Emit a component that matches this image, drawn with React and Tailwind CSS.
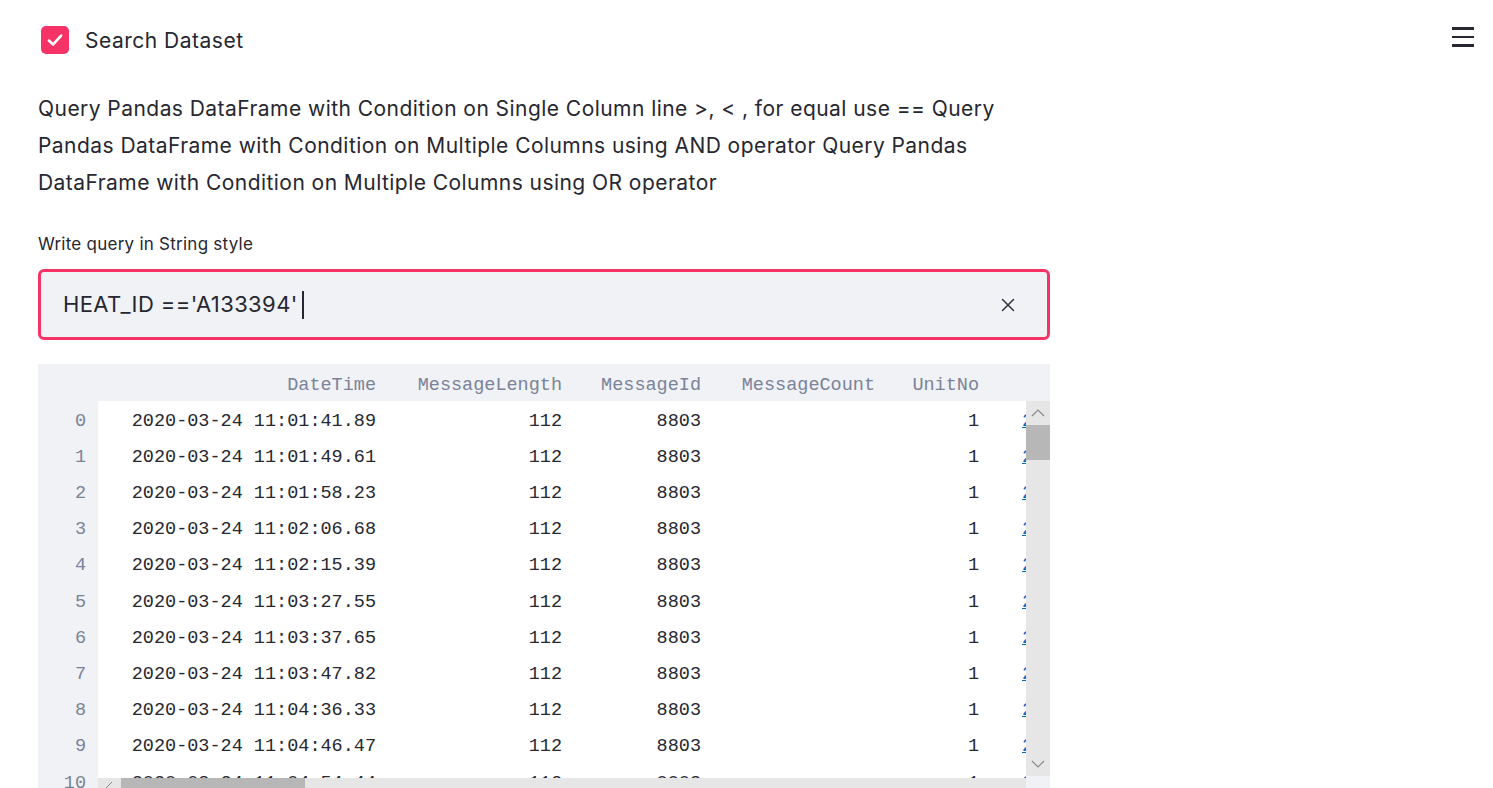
import { X } from "lucide-react";

const rows = [
  "2020-03-24 11:01:41.89",
  "2020-03-24 11:01:49.61",
  "2020-03-24 11:01:58.23",
  "2020-03-24 11:02:06.68",
  "2020-03-24 11:02:15.39",
  "2020-03-24 11:03:27.55",
  "2020-03-24 11:03:37.65",
  "2020-03-24 11:03:47.82",
  "2020-03-24 11:04:36.33",
  "2020-03-24 11:04:46.47",
  "2020-03-24 11:04:54.44",
];

const sans = { fontFamily: 'Inter, "Noto Sans", sans-serif' };

function Row({ dt }) {
  return (
    <div className="flex h-[36.2px] items-center pt-[5px] text-[#262730] whitespace-nowrap">
      <div className="w-[288px] shrink-0 pr-[10px] text-right">{dt}</div>
      <div className="w-[186px] shrink-0 pr-[10px] text-right">112</div>
      <div className="w-[139px] shrink-0 pr-[10px] text-right">8803</div>
      <div className="w-[174px] shrink-0 pr-[10px] text-right"></div>
      <div className="w-[104px] shrink-0 pr-[10px] text-right">1</div>
      <div className="shrink-0 pl-[33px] text-[#0068c9] underline">{dt}</div>
    </div>
  );
}

export default function App() {
  return (
    <div className="relative h-[788px] w-full overflow-hidden bg-white text-[#262730]" style={sans}>
      {/* hamburger */}
      <div className="absolute right-[19px] top-[27px] flex w-[22px] flex-col gap-[6px]">
        <span className="h-[2.5px] w-full bg-[#262730]" />
        <span className="h-[2.5px] w-full bg-[#262730]" />
        <span className="h-[2.5px] w-full bg-[#262730]" />
      </div>

      <div className="ml-[38px] w-[1012px] pt-[26px]">
        {/* checkbox */}
        <div className="flex h-[28px] items-center gap-[16px] pl-[3px]">
          <div className="flex h-[28px] w-[28px] items-center justify-center rounded-[5px] bg-[#f63366]">
            <svg width="20" height="20" viewBox="0 0 18 18" fill="none">
              <path d="M3.5 9.5 L7.3 13 L14.5 5" stroke="white" strokeWidth="2.4" strokeLinecap="round" strokeLinejoin="round" />
            </svg>
          </div>
          <span className="mt-[2px] text-[21px] leading-[28px] tracking-[0.5px]">Search Dataset</span>
        </div>

        <p className="mt-[36px] pr-[24px] text-[21px] leading-[37px] tracking-[0.45px]">
          Query Pandas DataFrame with Condition on Single Column line &gt;, &lt; , for equal use == Query Pandas DataFrame with Condition on Multiple Columns using AND operator Query Pandas DataFrame with Condition on Multiple Columns using OR operator
        </p>

        <div className="mt-[31px] text-[17px] leading-[24px] tracking-[0.25px]">Write query in String style</div>

        {/* input */}
        <div className="mt-[13px] flex h-[71px] items-center rounded-[6px] border-[3px] border-[#f63366] bg-[#f0f2f6] pl-[22px] pr-[28px]">
          <span className="text-[22px] tracking-[0.4px]">HEAT_ID =='A133394'</span>
          <span className="ml-[4px] h-[28px] w-[2px] bg-[#262730]" />
          <div className="flex-1" />
          <X size={22} strokeWidth={1.6} className="text-[#31333f]" />
        </div>

        {/* dataframe */}
        <div
          className="relative mt-[24px] h-[430px] overflow-hidden bg-[#f0f2f6] text-[18.5px]"
          style={{ fontFamily: '"Liberation Mono", "DejaVu Sans Mono", monospace' }}
        >
          <div className="flex h-[37px] items-center whitespace-nowrap pl-[60px] pt-[6px] text-[#7a8399]">
            <div className="w-[288px] shrink-0 pr-[10px] text-right">DateTime</div>
            <div className="w-[186px] shrink-0 pr-[10px] text-right">MessageLength</div>
            <div className="w-[139px] shrink-0 pr-[10px] text-right">MessageId</div>
            <div className="w-[174px] shrink-0 pr-[10px] text-right">MessageCount</div>
            <div className="w-[104px] shrink-0 pr-[10px] text-right">UnitNo</div>
          </div>
          <div className="flex">
            <div className="w-[60px] shrink-0 text-[#7a8399]">
              {rows.map((_, i) => (
                <div key={i} className="flex h-[36.2px] items-center justify-end pr-[12px] pt-[5px]">
                  {i}
                </div>
              ))}
            </div>
            <div className="relative w-[928px] shrink-0 overflow-hidden bg-white">
              {rows.map((dt, i) => (
                <Row key={i} dt={dt} />
              ))}
              {/* horizontal scrollbar */}
              <div className="absolute left-0 top-[377px] flex h-[14px] w-full bg-[#e6e6e6]">
                <div className="flex w-[22px] items-center justify-center">
                  <svg width="10" height="10" viewBox="0 0 10 10"><path d="M8 2 L2 8" stroke="#8a8a8a" strokeWidth="1" fill="none" /></svg>
                </div>
                <div className="ml-[1px] w-[184px] bg-[#b7b7b7]" />
              </div>
            </div>
            {/* vertical scrollbar */}
            <div className="flex h-[375px] w-[24px] shrink-0 flex-col bg-[#e6e6e6]">
              <div className="flex h-[24px] items-center justify-center">
                <svg width="14" height="8" viewBox="0 0 14 8"><path d="M1 7 L7 1 L13 7" stroke="#8a8a8a" strokeWidth="1.2" fill="none" /></svg>
              </div>
              <div className="h-[35px] bg-[#b7b7b7]" />
              <div className="flex-1" />
              <div className="flex h-[24px] items-center justify-center">
                <svg width="14" height="8" viewBox="0 0 14 8"><path d="M1 1 L7 7 L13 1" stroke="#8a8a8a" strokeWidth="1.2" fill="none" /></svg>
              </div>
            </div>
          </div>
        </div>
      </div>
    </div>
  );
}
